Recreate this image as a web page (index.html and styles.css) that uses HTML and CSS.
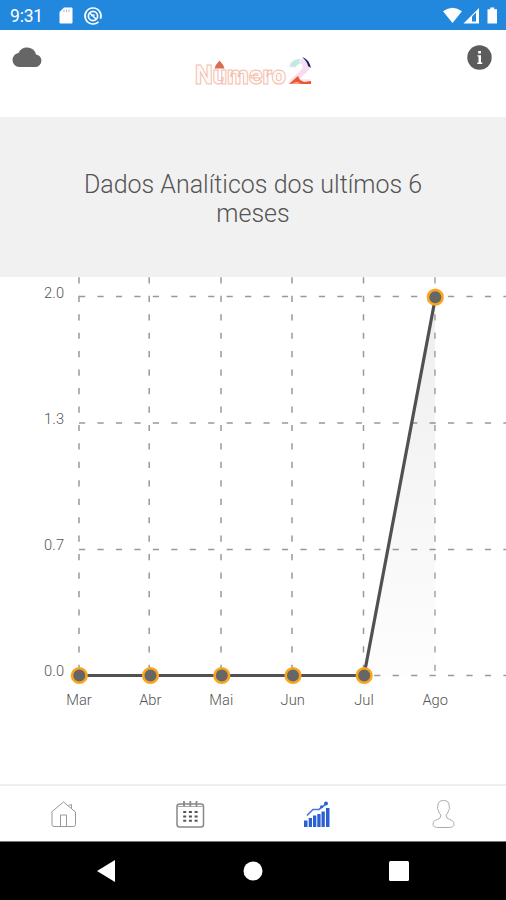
FILE: index.html
```html
<!DOCTYPE html>
<html lang="pt-BR">
<head>
  <meta charset="UTF-8">
  <title>Número 2</title>
  <link rel="stylesheet" href="styles.css">
</head>
<body>
  <div class="status-bar">
    <span class="clock">9:31</span>
    <svg class="sd-icon" width="14" height="17" viewBox="0 0 14 17">
      <path d="M5 .5h7.5a1 1 0 0 1 1 1v14a1 1 0 0 1-1 1h-11a1 1 0 0 1-1-1V5z" fill="#fff"/>
      <path d="M5 2.5v2.5M7.5 2.5v2.5M10 2.5v2.5" stroke="#8dbfed" stroke-width="1"/>
    </svg>
    <svg class="sync-icon" width="18" height="18" viewBox="0 0 18 18" fill="none" stroke="#fff">
      <path d="M14.5 14.8A8 8 0 1 1 16.5 11.8" stroke-width="1.7"/>
      <circle cx="9" cy="9" r="4.6" stroke-width="1.7"/>
      <path d="M5.8 6l6.2 6M7 8.5l3.6-.4" stroke-width="1.5"/>
    </svg>
    <svg class="signal-icons" width="56" height="18" viewBox="0 0 56 18" fill="#fff">
      <path d="M0 4.3Q9.500-3 19 4.300L9.500 16z"/>
      <path d="M20.500 16.500L36 1v15.500z"/>
      <path d="M29 14.500V9.500l4-4v9z" fill="#2188dd"/>
      <path d="M44.500 2.200h2.800V.5h4v1.700h2.700v14.300h-9.500z"/>
    </svg>
  </div>

  <header>
    <svg class="cloud" width="30" height="20" viewBox="0 0 30 20">
      <path d="M7.200 20A7.100 7.100 0 0 1 6.500 5.900 9.300 9.300 0 0 1 24 7.400 6.350 6.350 0 0 1 23.700 20z" fill="#666"/>
    </svg>
    <svg class="logo" width="124" height="40" viewBox="0 0 124 40">
      <defs>
        <linearGradient id="two" x1="0" y1="0" x2="0" y2="1">
          <stop offset="0" stop-color="#e8eef8"/>
          <stop offset=".5" stop-color="#fbd9ed"/>
          <stop offset=".75" stop-color="#fbdfe8"/>
          <stop offset=".8" stop-color="#ed6234"/>
        </linearGradient>
      </defs>
      <text class="logo-name" x="2" y="29.500" textLength="91" lengthAdjust="spacingAndGlyphs">Numero</text>
      <path d="M21.500 14.500q1-4 5-8 4 4 5 8z" fill="#d96d4f"/>
      <text class="logo-two" x="95" y="29.500" textLength="24" lengthAdjust="spacingAndGlyphs">2</text>
      <path d="M97 12q2-6 9-7v5l-5 3z" fill="#bfe9e3"/>
      <path d="M109 3q7 2 9 11l-3-2q-1-5-5-8z" fill="#1b1b60"/>
      <path d="M96 30l9-8 2 4 4 2 7-1v3h-9l-5-2z" fill="#e9582c"/>
    </svg>
    <svg class="info" width="25" height="25" viewBox="0 0 25 25">
      <circle cx="12.500" cy="12.500" r="12.200" fill="#5c5c5c"/>
      <path d="M10.500 10.200H14v7.400h1.300V19h-5v-1.400H11.500v-6h-1zM11.200 6h2.800v2.600h-2.800z" fill="#fff"/>
    </svg>
  </header>

  <section class="title">
    <h1>Dados Analíticos dos ultímos 6 meses</h1>
  </section>

  <main>
    <svg class="chart" width="506" height="507" viewBox="0 277 506 507">
      <defs>
        <linearGradient id="area" x1="0" y1="0" x2="0" y2="1">
          <stop offset="0" stop-color="#555" stop-opacity=".1"/>
          <stop offset="1" stop-color="#555" stop-opacity=".01"/>
        </linearGradient>
      </defs>
      <path class="grid" d="M79 296.500H506M79 423H506M79 549.500H506M79 675.500H506"/>
      <path class="grid" d="M79 277.300V675M149.200 277.300V675M221 277.300V675M292 277.300V675M363.500 277.300V675"/>
      <path class="grid light" d="M435 277.300V675"/>
      <path d="M79 675.500H364L435 297V675.500z" fill="url(#area)"/>
      <path class="line" d="M79 675.500H364L435.500 297"/>
      <g class="dots">
        <circle cx="79.300" cy="675.500" r="7.300"/>
        <circle cx="150.500" cy="675.500" r="7.300"/>
        <circle cx="221.800" cy="675.500" r="7.300"/>
        <circle cx="293" cy="675.500" r="7.300"/>
        <circle cx="364.200" cy="675.500" r="7.300"/>
        <circle cx="435.300" cy="297.200" r="7.300"/>
      </g>
      <g class="y-labels">
        <text x="64.300" y="297.500">2.0</text>
        <text x="64.300" y="423.500">1.3</text>
        <text x="64.300" y="549.500">0.7</text>
        <text x="64.300" y="675.500">0.0</text>
      </g>
      <g class="x-labels">
        <text x="79" y="705.300">Mar</text>
        <text x="150.300" y="705.300">Abr</text>
        <text x="221.300" y="705.300">Mai</text>
        <text x="292.700" y="705.300">Jun</text>
        <text x="364" y="705.300">Jul</text>
        <text x="435.200" y="705.300">Ago</text>
      </g>
    </svg>
  </main>

  <nav>
    <a>
      <svg width="30" height="30" viewBox="0 0 30 30" fill="none" stroke="#999">
        <path d="M3.500 12L15.500 2l12 10M4 12v12.500q0 2 2 2h19.500q2 0 2-2V12M20.500 5.500l3-1V8.500M12.500 26.500V15h6v11.500"/>
      </svg>
    </a>
    <a>
      <svg width="30" height="30" viewBox="0 0 30 30" fill="none" stroke="#888">
        <rect x="2" y="4" width="26.500" height="23" rx="2.500" stroke-width="1.500"/>
        <path d="M3 6.500h24.500" stroke="#aaa"/>
        <path d="M9 1v5.500M15.300 1v5.500M21.500 1v5.500" stroke-width="1.800"/>
        <path d="M8.200 12h14.600M8.200 16.500h14.600M8.200 20.700h14.600" stroke="#555" stroke-width="2" stroke-dasharray="3 2.700"/>
      </svg>
    </a>
    <a>
      <svg width="30" height="30" viewBox="0 0 30 30" fill="#2b60d2">
        <path d="M3 20.500H6.500V27H3zM7.700 18H11v9H7.700zM12 15.500h3.300V27H12zM16.300 14h3.300v13h-3.300zM20.500 11.500h3.300V27h-3.300zM25 8h3.500v19H25z"/>
        <path d="M6 15.500l6-6h6l7-5.500" fill="none" stroke="#4c78d8" stroke-width="1.700"/>
        <circle cx="25" cy="3.500" r="2"/>
        <circle cx="20.500" cy="6.800" r="1.500"/>
      </svg>
    </a>
    <a>
      <svg width="30" height="30" viewBox="0 0 30 30" fill="none" stroke="#aaa">
        <path d="M15.500 .5q-6 0-5.700 6-1.300 2 .7 4 .3 3 2.500 4.500 0 3.500-3.500 4.500-4.500 1-4.500 5 0 3 6 3h9q6 0 6-3 0-4-4.500-5-3.500-1-3.500-4.500 2.200-1.500 2.500-4.500 2-2 .7-4 .3-6-5.700-6z"/>
      </svg>
    </a>
  </nav>

  <footer>
    <svg width="20" height="22" viewBox="0 0 20 22" fill="#fff"><path d="M19 0v22L1 11z"/></svg>
    <svg width="20" height="20" viewBox="0 0 20 20" fill="#fff"><circle cx="10" cy="10" r="9.500"/></svg>
    <svg width="20" height="20" viewBox="0 0 20 20" fill="#fff"><rect width="20" height="20" rx="1.500"/></svg>
  </footer>
</body>
</html>
```

FILE: styles.css
```css
* {
  box-sizing: border-box;
}
body {
  margin: 0;
  height: 900px;
  display: flex;
  flex-direction: column;
  overflow: hidden;
  font-family: Roboto, sans-serif;
  background: #fff;
  color: #555;
}
svg {
  display: block;
  overflow: visible;
}
.status-bar {
  height: 30px;
  display: flex;
  align-items: center;
  padding: 1px 7px 0 10px;
  background: #2188dd;
  color: #fff;
}
.clock {
  width: 49px;
  font-size: 17.5px;
  letter-spacing: -0.2px;
}
.sync-icon {
  margin-left: 11px;
}
.signal-icons {
  margin-left: auto;
}
header {
  height: 87px;
  display: flex;
  justify-content: space-between;
  align-items: flex-start;
  padding: 15px 14px 0 12px;
}
.cloud {
  margin-top: 2px;
}
.logo {
  margin-top: 9px;
}
.logo-name {
  font: 900 26px Roboto, sans-serif;
  fill: #fffaf8;
  stroke: #f2bfae;
  stroke-width: 1px;
}
.logo-two {
  font: 900 35px Roboto, sans-serif;
  fill: url(#two);
}
.title {
  height: 160px;
  background: #f1f1f1;
  padding: 53px 70px 0;
}
h1 {
  margin: 0;
  font-size: 25px;
  line-height: 29px;
  font-weight: 300;
  text-align: center;
}
main {
  height: 507px;
}
.grid {
  fill: none;
  stroke: #999;
  stroke-width: 1.5;
  stroke-dasharray: 6.2 12.25;
}
.grid.light {
  stroke: #bbb;
  stroke-width: 2;
}
.line {
  fill: none;
  stroke: #515151;
  stroke-width: 3.2;
}
.dots {
  fill: #666;
  stroke: #fba51f;
  stroke-width: 2.6;
}
.y-labels,
.x-labels {
  font-size: 14.7px;
  font-weight: 300;
  fill: #555;
}
.y-labels {
  text-anchor: end;
  letter-spacing: 0.2px;
}
.x-labels {
  text-anchor: middle;
}
nav {
  height: 58px;
  display: grid;
  grid-template-columns: repeat(4, 1fr);
  justify-items: center;
  padding-top: 14px;
  border-top: 2px solid #eee;
  border-bottom: 1px solid #777;
}
footer {
  height: 58px;
  display: flex;
  justify-content: space-between;
  align-items: center;
  padding: 0 97px 0 96px;
  background: #000;
}
```
